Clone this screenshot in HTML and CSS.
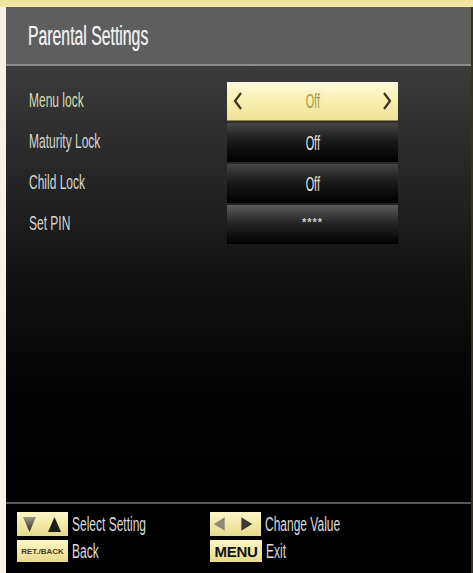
FILE: index.html
```html
<!DOCTYPE html>
<html>
<head>
<meta charset="utf-8">
<link rel="stylesheet" href="styles.css">
</head>
<body>
<div class="screen">
  <div class="header"><span class="sq title">Parental Settings</span></div>
  <div class="header-line"></div>
  <div class="content">
    <div class="label selected"><span class="sq">Menu lock</span></div>
    <div class="value hl">
      <svg class="chev" width="10" height="18" viewBox="0 0 10 18"><path d="M8 1 L2 9 L8 17" fill="none" stroke="#3a3320" stroke-width="2.2"/></svg>
      <span class="sqc">Off</span>
      <svg class="chev" width="10" height="18" viewBox="0 0 10 18"><path d="M2 1 L8 9 L2 17" fill="none" stroke="#3a3320" stroke-width="2.2"/></svg>
    </div>
    <div class="label"><span class="sq">Maturity Lock</span></div>
    <div class="value dark"><span class="sqc">Off</span></div>
    <div class="label"><span class="sq">Child Lock</span></div>
    <div class="value dark"><span class="sqc">Off</span></div>
    <div class="label"><span class="sq">Set PIN</span></div>
    <div class="value dark pin"><span class="sqc small">****</span></div>
  </div>
  <div class="footer-line"></div>
  <div class="footer">
    <div class="hint">
      <span class="key key-tall">
        <svg width="51" height="24" viewBox="0 0 51 24">
          <defs><linearGradient id="g1" x1="0" y1="0" x2="0" y2="1"><stop offset="0" stop-color="#9a9a8a"/><stop offset="1" stop-color="#2a2a22"/></linearGradient></defs>
          <polygon points="6,5 19,5 12.5,20" fill="url(#g1)"/>
          <polygon points="31,20 44,20 37.5,5" fill="#1e1e18"/>
        </svg>
      </span>
      <span class="sq ftext">Select Setting</span>
    </div>
    <div class="hint">
      <span class="key key-tall">
        <svg width="52" height="24" viewBox="0 0 52 24">
          <polygon points="4,12 15,5 15,19" fill="#8a8a7a"/>
          <polygon points="43,12 32,5 32,19" fill="#3a3a30"/>
        </svg>
      </span>
      <span class="sq ftext">Change Value</span>
    </div>
    <div class="hint">
      <span class="key key-short"><span class="ret">RET./BACK</span></span>
      <span class="sq ftext">Back</span>
    </div>
    <div class="hint">
      <span class="key key-short menu"><span class="menutxt">MENU</span></span>
      <span class="sq ftext">Exit</span>
    </div>
  </div>
</div>
</body>
</html>
```

FILE: styles.css
```css
html, body {
  margin: 0;
  padding: 0;
}
body {
  width: 473px;
  height: 573px;
  overflow: hidden;
  background: linear-gradient(to bottom, #efe39c 0, #f2e7a8 7px, transparent 7px), #f6f3e6;
  font-family: "Liberation Sans", Arial, sans-serif;
}
.screen {
  margin: 7px 0 0 6px;
  width: 465px;
  height: 566px;
  border-right: 2px solid #3f3019;
  display: flex;
  flex-direction: column;
  background: #000;
}
.header {
  height: 57px;
  flex: none;
  background: #5e5e5e;
  display: flex;
  align-items: center;
  padding-left: 22px;
  padding-top: 2px;
  box-sizing: border-box;
}
.sq {
  display: inline-block;
  white-space: nowrap;
  transform: scaleX(0.6);
  transform-origin: left center;
}
.sqc {
  display: inline-block;
  white-space: nowrap;
  transform: scaleX(0.52);
  transform-origin: center center;
}
.title {
  font-size: 27px;
  color: #f0f0f0;
  transform: scaleX(0.585);
  text-shadow: 0 0 1px rgba(255,255,255,0.5);
}
.header-line {
  height: 2px;
  flex: none;
  background: #8c8c8c;
}
.content {
  height: 436px;
  flex: none;
  box-sizing: border-box;
  padding: 16px 0 0 23px;
  display: grid;
  grid-template-columns: 198px 171px;
  grid-auto-rows: 39px;
  row-gap: 2px;
  align-content: start;
  background: linear-gradient(to bottom, #3b3b3b 0%, #262626 25%, #111 50%, #030303 75%, #000 100%);
}
.label {
  display: flex;
  align-items: center;
  font-size: 20px;
  color: #d6d6d0;
  padding-bottom: 3px;
}
.label.selected {
  color: #d9ddb0;
}
.value {
  display: flex;
  align-items: center;
  justify-content: center;
  font-size: 21px;
  color: #e4e4e0;
}
.value.hl {
  justify-content: space-between;
  padding: 0 6px;
  background: linear-gradient(to bottom, #fffbdc 0%, #f8f0b4 45%, #eee293 100%);
  color: #a29a4c;
  border-bottom: 1px solid #8c8350;
  box-sizing: border-box;
}
.value.dark {
  background: linear-gradient(to bottom, #474747 0%, #1a1a1a 45%, #000 100%);
}
.value.pin {
  background: linear-gradient(to bottom, #5c5c5c 0%, #262626 45%, #000 100%);
}
.small {
  font-size: 11px;
  font-weight: bold;
  color: #cfcfcf;
  letter-spacing: 1px;
  margin-bottom: 6px;
  transform: none;
}
.chev {
  display: block;
}
.footer-line {
  height: 2px;
  flex: none;
  background: #575757;
}
.footer {
  flex: 1;
  box-sizing: border-box;
  padding: 8px 0 0 11px;
  display: grid;
  grid-template-columns: 193px auto;
  grid-template-rows: 24px 22px;
  row-gap: 4px;
  background: #000;
}
.hint {
  display: flex;
  align-items: center;
  gap: 4px;
}
.key {
  display: flex;
  align-items: center;
  justify-content: center;
  background: linear-gradient(to bottom, #fbf6c6 0%, #f1e8a6 55%, #e4d98c 100%);
  flex: none;
}
.key-tall {
  width: 51px;
  height: 24px;
}
.key-tall svg {
  display: block;
}
.key-short {
  width: 51px;
  height: 22px;
}
.key-short.menu {
  width: 52px;
}
.ret {
  font-size: 8px;
  font-weight: bold;
  color: #4a3a22;
  white-space: nowrap;
}
.menutxt {
  font-size: 15px;
  font-weight: bold;
  color: #111;
  letter-spacing: -0.3px;
}
.ftext {
  font-size: 20px;
  color: #dcdcdc;
}
```
